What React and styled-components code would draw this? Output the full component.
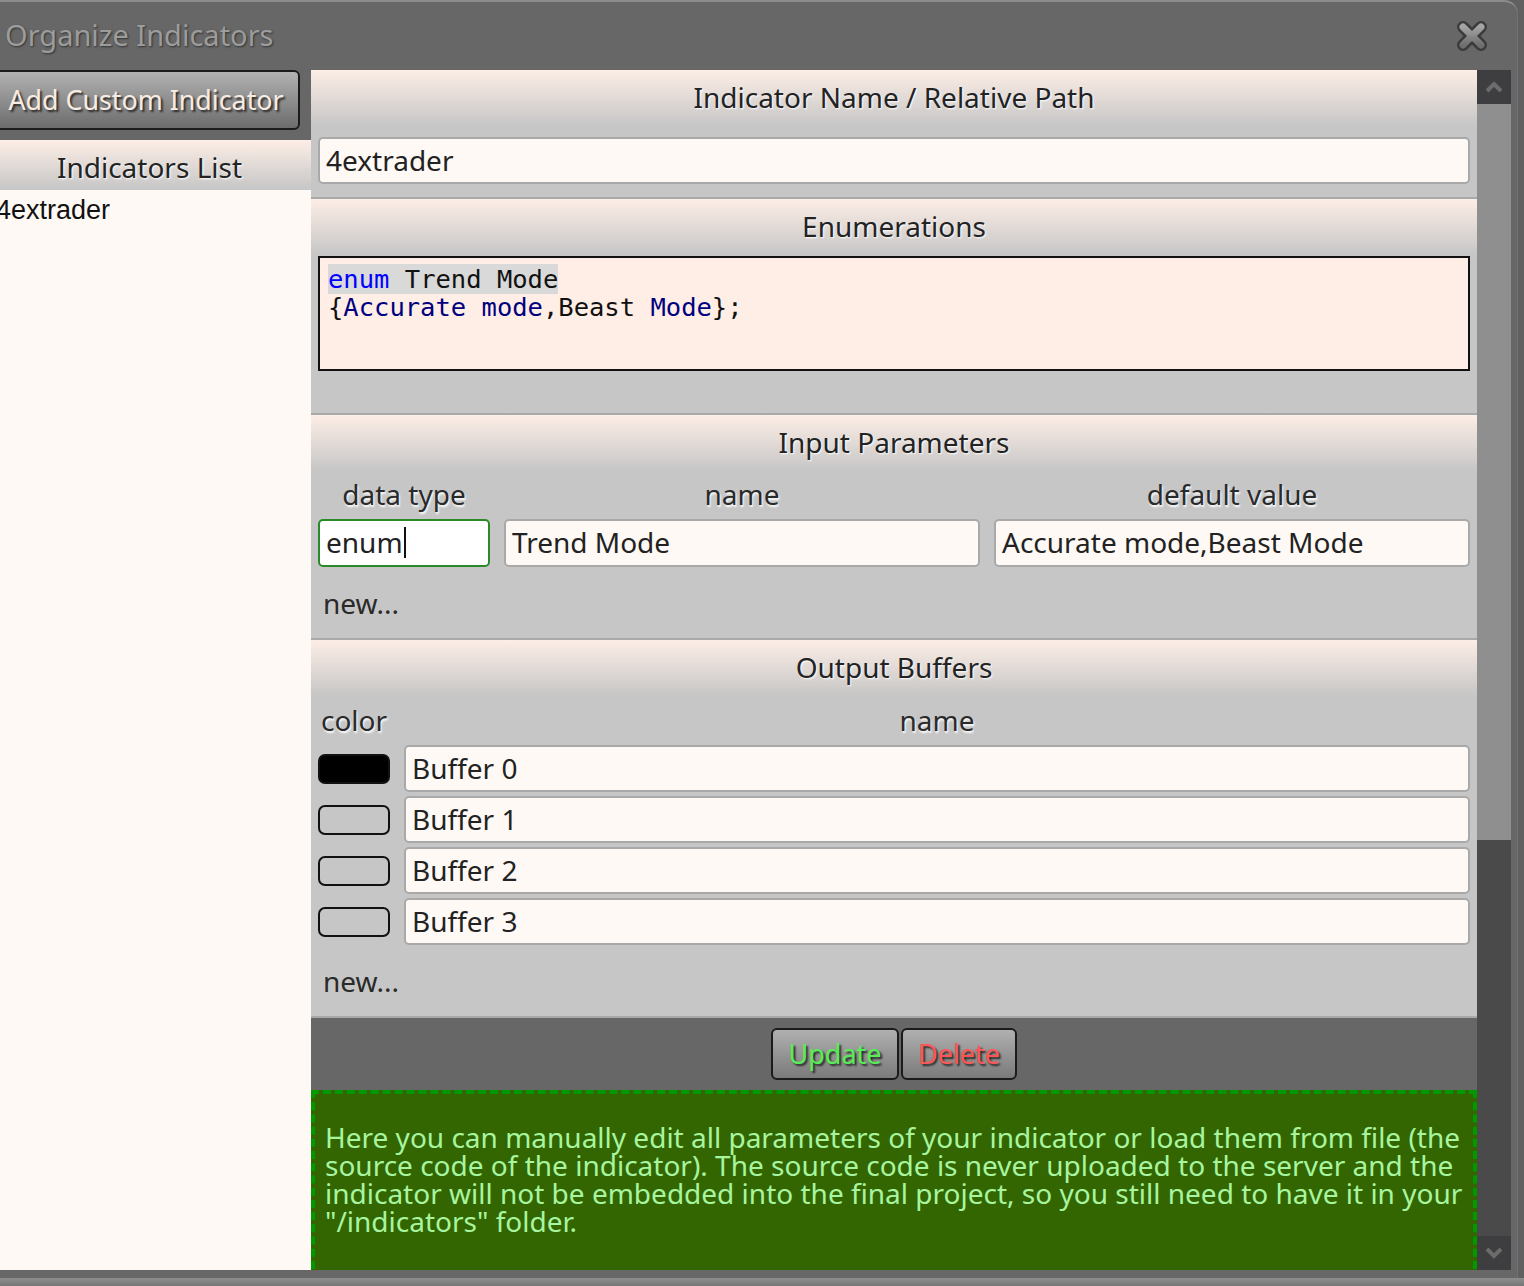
import React from "react";
import styled, { createGlobalStyle } from "styled-components";

const GlobalStyle = createGlobalStyle`
  html, body {
    margin: 0;
    padding: 0;
    width: 1524px;
    height: 1286px;
    overflow: hidden;
    background: #606060;
  }
  body {
    font-family: "Noto Sans", "Open Sans", sans-serif;
  }
  * { box-sizing: border-box; }
`;

const Page = styled.div`
  display: flex;
  flex-direction: column;
  width: 1524px;
  height: 1286px;
`;

const Window = styled.div`
  display: flex;
  flex-direction: column;
  width: 1530px;
  height: 1278px;
  margin-left: -12px;
  background: #676767;
  border-top: 2px solid #8c8c8c;
  border-top-right-radius: 14px;
  box-shadow: inset -1px 0 0 #707070;
`;

const PageBelow = styled.div`
  flex: 1;
  background: linear-gradient(#8e8e8e, #767676);
`;

const TitleBar = styled.div`
  height: 68px;
  display: flex;
  align-items: center;
  justify-content: space-between;
  padding: 0 30px 0 17px;
`;

const Title = styled.div`
  font-size: 29px;
  color: #9c9c9c;
  text-shadow: 1px 1px 2px #333;
  margin-top: -3px;
`;

const CloseButton = styled.div`
  width: 32px;
  height: 34px;
  display: flex;
  align-items: center;
  justify-content: center;
`;

const Body = styled.div`
  display: flex;
  height: 1200px;
  padding-right: 7px;
`;

const LeftColumn = styled.div`
  width: 323px;
  display: flex;
  flex-direction: column;
`;

const AddButton = styled.div`
  height: 60px;
  margin-right: 11px;
  margin-left: 2px;
  margin-bottom: 10px;
  border: 2px solid #1b1b1b;
  border-radius: 6px;
  background: linear-gradient(#b2b2b2, #6c6c6c);
  display: flex;
  align-items: center;
  justify-content: center;
  font-size: 26.8px;
  color: #f8ece2;
  text-shadow: 2px 2px 2px #2a2a2a;
  padding: 0 0 2px 2px;
`;

const PanelHeader = styled.div`
  height: ${(p) => p.$h || 56}px;
  flex: none;
  display: flex;
  align-items: center;
  justify-content: center;
  background: linear-gradient(#fdeee6, #c6c6c6);
  font-size: 28px;
  color: #232323;
  text-shadow: 1px 1px 2px #ffffff;
  padding: ${(p) => p.$pad || "0 0 2px 0"};
`;

const List = styled.div`
  flex: 1;
  background: #fef9f5;
  padding: 3px 0 0 10px;
`;

const ListItem = styled.div`
  font-family: "Liberation Sans", Arial, sans-serif;
  font-size: 27px;
  color: #111;
  line-height: 34px;
  margin-left: -2px;
`;

const Main = styled.div`
  width: 1166px;
  flex: none;
  overflow: hidden;
  background: #c6c6c6;
  display: flex;
  flex-direction: column;
`;

const Section = styled.div`
  flex: none;
  display: flex;
  flex-direction: column;
  border-bottom: 2px solid #a9a9a9;
`;

const FieldRow = styled.div`
  padding: ${(p) => p.$pad || "0 7px"};
  display: grid;
  grid-template-columns: ${(p) => p.$cols || "1fr"};
  column-gap: 14px;
`;

const Field = styled.div`
  height: ${(p) => p.$h || 47}px;
  border: 2px solid ${(p) => (p.$focus ? "#2a8a2a" : "#a9a9a9")};
  border-radius: 5px;
  background: ${(p) => (p.$focus ? "#ffffff" : "#fef9f5")};
  display: flex;
  align-items: center;
  padding: 0 0 2px 6px;
  font-size: 28px;
  color: #222;
  white-space: nowrap;
  overflow: hidden;
`;

const Caret = styled.span`
  display: inline-block;
  width: 2px;
  height: 31px;
  background: #111;
  margin-left: 1px;
`;

const CodeBox = styled.div`
  margin: 1px 7px 0;
  height: 115px;
  border: 2px solid #111;
  background: #ffeee6;
  padding: 7px 8px;
  font-family: "DejaVu Sans Mono", "Liberation Mono", monospace;
  font-size: 25.5px;
  line-height: 28px;
  color: #111;
  white-space: pre;
`;

const CodeLine = styled.div`
  display: block;
`;

const Highlight = styled.span`
  background: #d9d9d9;
`;

const Tok = styled.span`
  color: ${(p) => p.$c};
`;

const Spacer = styled.div`
  height: ${(p) => p.$h}px;
`;

const LabelRow = styled.div`
  height: ${(p) => p.$h}px;
  padding: 0 7px 2px;
  display: grid;
  grid-template-columns: ${(p) => p.$cols};
  column-gap: 14px;
  align-items: center;
`;

const ColLabel = styled.div`
  text-align: center;
  font-size: 28px;
  color: #2a2a2a;
  text-shadow: 1px 2px 2px #ffffff;
`;

const NewLink = styled.div`
  height: 71px;
  padding: 18px 0 0 12px;
  font-size: 28px;
  line-height: 36px;
  color: #2a2a2a;
`;

const BufferList = styled.div`
  display: flex;
  flex-direction: column;
  gap: 4px;
  padding: 0 7px;
`;

const BufferRow = styled.div`
  display: grid;
  grid-template-columns: 72px 1fr;
  column-gap: 14px;
  align-items: center;
`;

const Swatch = styled.div`
  height: 30px;
  border: 2px solid #111;
  border-radius: 7px;
  background: ${(p) => p.$color || "transparent"};
`;

const ButtonBar = styled.div`
  flex: none;
  height: 72px;
  background: #676767;
  display: flex;
  justify-content: center;
  gap: 2px;
  padding-top: 10px;
`;

const ActionButton = styled.div`
  height: 52px;
  width: ${(p) => p.$w}px;
  border: 2px solid #1b1b1b;
  border-radius: 6px;
  background: linear-gradient(#b0b0b0, #7a7a7a);
  display: flex;
  align-items: center;
  justify-content: center;
  font-size: 27px;
  color: ${(p) => p.$color};
  text-shadow: 2px 2px 2px #2a2a2a;
  padding-bottom: 2px;
`;

const InfoBox = styled.div`
  flex: none;
  height: 240px;
  background: #336600;
  border: 4px dashed #009900;
  padding: 29px 10px 0 10px;
  font-size: 28px;
  line-height: 28px;
  color: #a8f5a0;
`;

const InfoLine = styled.div`
  white-space: nowrap;
`;

const ScrollBar = styled.div`
  width: 34px;
  flex: none;
  display: flex;
  flex-direction: column;
`;

const ScrollBtn = styled.div`
  height: 34px;
  background: #3e3e40;
  display: flex;
  align-items: center;
  justify-content: center;
`;

const Thumb = styled.div`
  height: 736px;
  background: #8f8f8f;
`;

const Track = styled.div`
  flex: 1;
  background: #4a4a4b;
`;

const Chevron = ({ up }) => (
  <svg width="18" height="12" viewBox="0 0 18 12">
    <path
      d={up ? "M2 10 L9 3 L16 10" : "M2 2 L9 9 L16 2"}
      fill="none"
      stroke="#6c6c6c"
      strokeWidth="4"
    />
  </svg>
);

const CloseIcon = () => (
  <svg width="32" height="32" viewBox="0 0 32 32">
    <defs>
      <linearGradient id="xg" x1="0" y1="0" x2="0" y2="1">
        <stop offset="0" stopColor="#a4a4a4" />
        <stop offset="1" stopColor="#6e6e6e" />
      </linearGradient>
    </defs>
    <path d="M7 7 L25 25 M25 7 L7 25" stroke="#3a3a3a" strokeWidth="12" strokeLinecap="round" />
    <path d="M7 7 L25 25 M25 7 L7 25" stroke="url(#xg)" strokeWidth="7" strokeLinecap="round" />
  </svg>
);

const paramCols = "172px 1fr 1fr";

export default function App() {
  return (
    <Page>
      <GlobalStyle />
      <Window>
        <TitleBar>
          <Title>Organize Indicators</Title>
          <CloseButton>
            <CloseIcon />
          </CloseButton>
        </TitleBar>
        <Body>
          <LeftColumn>
            <AddButton>Add Custom Indicator</AddButton>
            <PanelHeader $h={50} $pad="3px 0 0 0">Indicators List</PanelHeader>
            <List>
              <ListItem>4extrader</ListItem>
            </List>
          </LeftColumn>

          <Main>
            <Section>
              <PanelHeader>Indicator Name / Relative Path</PanelHeader>
              <FieldRow $pad="11px 7px 13px">
                <Field>4extrader</Field>
              </FieldRow>
            </Section>

            <Section>
              <PanelHeader>Enumerations</PanelHeader>
              <CodeBox>
                <CodeLine>
                  <Highlight>
                    <Tok $c="#0000ff">enum</Tok> Trend Mode
                  </Highlight>
                </CodeLine>
                <CodeLine>
                  {"{"}
                  <Tok $c="#000080">Accurate mode</Tok>,Beast <Tok $c="#000080">Mode</Tok>
                  {"};"}
                </CodeLine>
              </CodeBox>
              <Spacer $h={42} />
            </Section>

            <Section>
              <PanelHeader>Input Parameters</PanelHeader>
              <LabelRow $h={48} $cols={paramCols}>
                <ColLabel>data type</ColLabel>
                <ColLabel>name</ColLabel>
                <ColLabel>default value</ColLabel>
              </LabelRow>
              <FieldRow $cols={paramCols}>
                <Field $h={48} $focus>
                  enum<Caret />
                </Field>
                <Field $h={48}>Trend Mode</Field>
                <Field $h={48}>Accurate mode,Beast Mode</Field>
              </FieldRow>
              <NewLink>new...</NewLink>
            </Section>

            <Section>
              <PanelHeader>Output Buffers</PanelHeader>
              <LabelRow $h={49} $cols="72px 1fr">
                <ColLabel>color</ColLabel>
                <ColLabel>name</ColLabel>
              </LabelRow>
              <BufferList>
                {["#000000", null, null, null].map((c, i) => (
                  <BufferRow key={i}>
                    <Swatch $color={c} />
                    <Field>Buffer {i}</Field>
                  </BufferRow>
                ))}
              </BufferList>
              <NewLink>new...</NewLink>
            </Section>

            <ButtonBar>
              <ActionButton $w={128} $color="#55ee55">Update</ActionButton>
              <ActionButton $w={116} $color="#ff5555">Delete</ActionButton>
            </ButtonBar>

            <InfoBox>
              <InfoLine>Here you can manually edit all parameters of your indicator or load them from file (the</InfoLine>
              <InfoLine>source code of the indicator). The source code is never uploaded to the server and the</InfoLine>
              <InfoLine>indicator will not be embedded into the final project, so you still need to have it in your</InfoLine>
              <InfoLine>"/indicators" folder.</InfoLine>
            </InfoBox>
          </Main>

          <ScrollBar>
            <ScrollBtn>
              <Chevron up />
            </ScrollBtn>
            <Thumb />
            <Track />
            <ScrollBtn>
              <Chevron />
            </ScrollBtn>
          </ScrollBar>
        </Body>
      </Window>
      <PageBelow />
    </Page>
  );
}
